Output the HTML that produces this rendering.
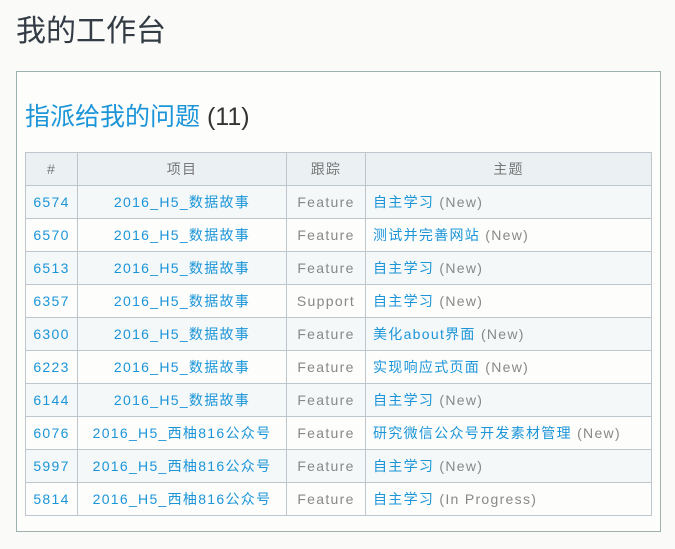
<!DOCTYPE html>
<html><head><meta charset="utf-8"><style>
body{margin:0;background:#fafaf8;font-family:"Liberation Sans","Noto Sans CJK SC",sans-serif;width:675px;height:549px;overflow:hidden;position:relative}
h1{position:absolute;left:16px;top:12px;margin:0;font-size:30px;font-weight:normal;color:#333b45;line-height:40px}
.box{position:absolute;left:16px;top:71px;width:643px;height:459px;border:1px solid #9fb0b0;background:#fdfdfc}
h2{position:absolute;left:8px;top:27px;margin:0;font-size:25px;font-weight:normal;color:#1b95d8;line-height:36px}
h2 span{color:#333}
table{position:absolute;left:8px;top:80px;border-collapse:collapse;font-size:14px;letter-spacing:1.3px}
td,th{border:1px solid #bcc6cc;height:32px;padding:0;text-align:center;color:#1b95d8;font-weight:normal}
th{background:#ebf0f2;color:#777}
tr:nth-child(even) td{background:#f4f8f9}
td.t{color:#888}
td.s{text-align:left;padding-left:7px}
td.s span{color:#888}
</style></head><body>
<h1>我的工作台</h1>
<div class="box">
<h2>指派给我的问题 <span>(11)</span></h2>
<table>
<tr><th style="width:51px">#</th><th style="width:208px">项目</th><th style="width:78px">跟踪</th><th style="width:285px">主题</th></tr>
<tr><td>6574</td><td>2016_H5_数据故事</td><td class="t">Feature</td><td class="s">自主学习 <span>(New)</span></td></tr>
<tr><td>6570</td><td>2016_H5_数据故事</td><td class="t">Feature</td><td class="s">测试并完善网站 <span>(New)</span></td></tr>
<tr><td>6513</td><td>2016_H5_数据故事</td><td class="t">Feature</td><td class="s">自主学习 <span>(New)</span></td></tr>
<tr><td>6357</td><td>2016_H5_数据故事</td><td class="t">Support</td><td class="s">自主学习 <span>(New)</span></td></tr>
<tr><td>6300</td><td>2016_H5_数据故事</td><td class="t">Feature</td><td class="s">美化about界面 <span>(New)</span></td></tr>
<tr><td>6223</td><td>2016_H5_数据故事</td><td class="t">Feature</td><td class="s">实现响应式页面 <span>(New)</span></td></tr>
<tr><td>6144</td><td>2016_H5_数据故事</td><td class="t">Feature</td><td class="s">自主学习 <span>(New)</span></td></tr>
<tr><td>6076</td><td>2016_H5_西柚816公众号</td><td class="t">Feature</td><td class="s">研究微信公众号开发素材管理 <span>(New)</span></td></tr>
<tr><td>5997</td><td>2016_H5_西柚816公众号</td><td class="t">Feature</td><td class="s">自主学习 <span>(New)</span></td></tr>
<tr><td>5814</td><td>2016_H5_西柚816公众号</td><td class="t">Feature</td><td class="s">自主学习 <span>(In Progress)</span></td></tr>
</table>
</div>
</body></html>
